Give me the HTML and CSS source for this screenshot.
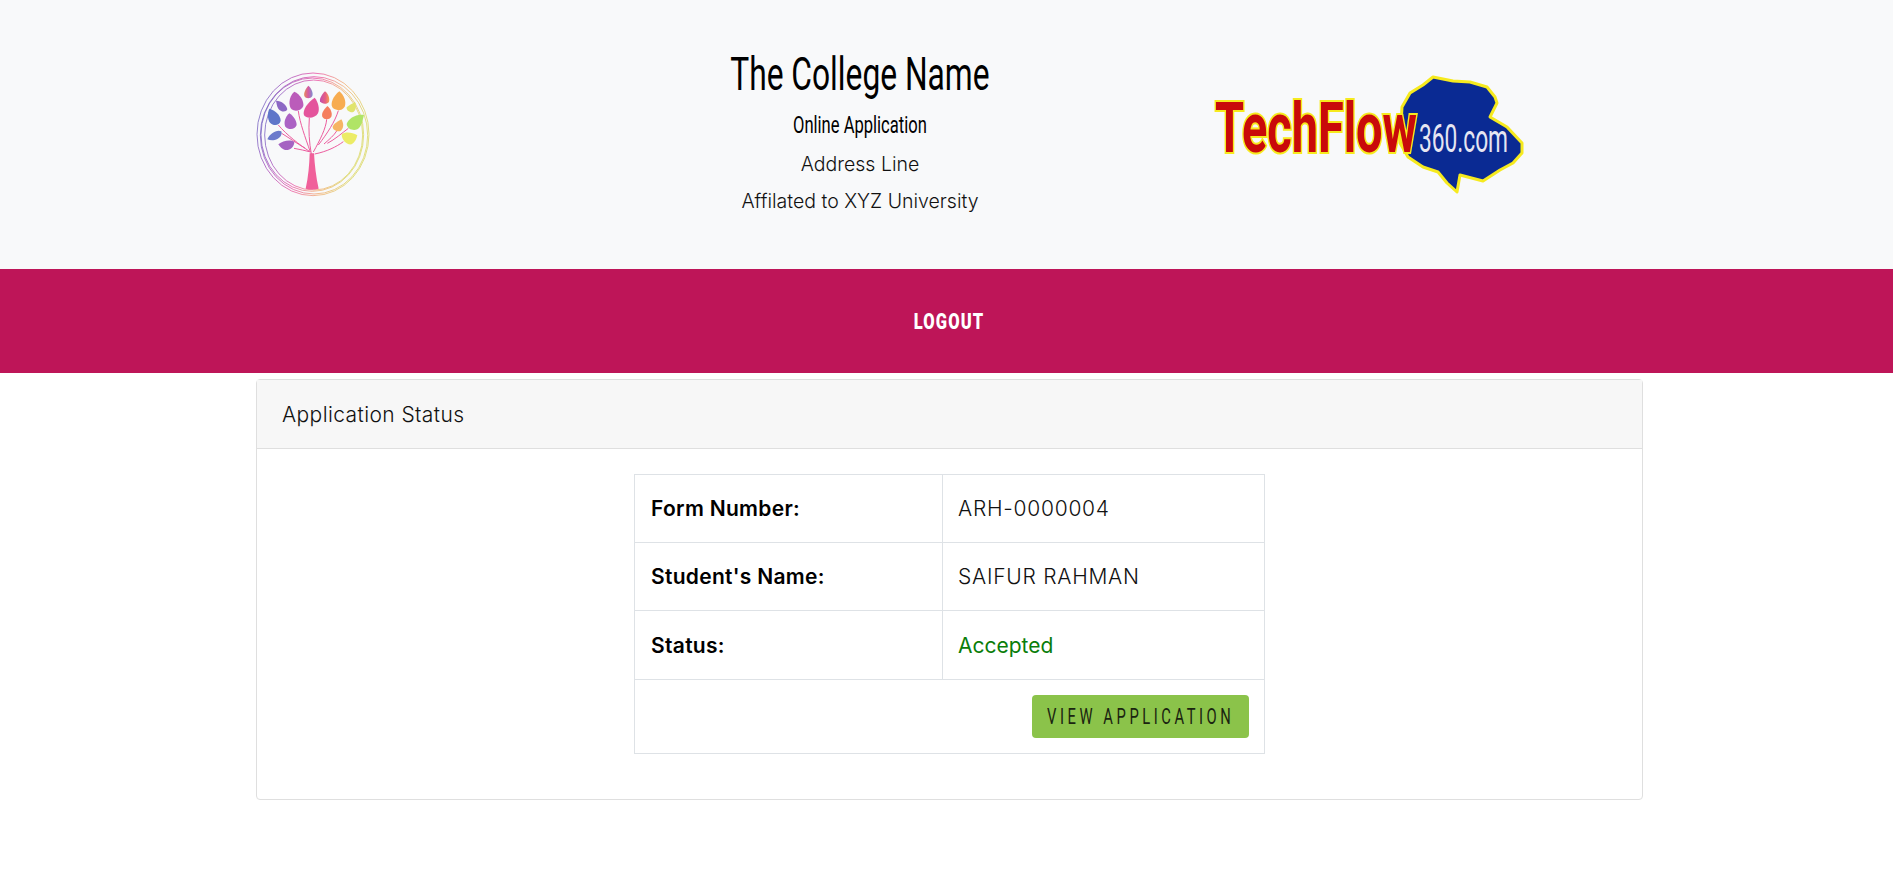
FILE: index.html
```html
<!DOCTYPE html>
<html lang="en">
<head>
<meta charset="utf-8">
<title>Application Status</title>
<link rel="stylesheet" href="styles.css">
</head>
<body>
<header class="masthead">
  <div class="masthead-inner">
    <div class="logo-left">
      <svg class="tree" viewBox="48 60 348 396" width="116" height="132" aria-hidden="true">
        <defs>
          <linearGradient id="ring" x1="0" y1="0" x2="1" y2="0.25">
            <stop offset="0" stop-color="#5f74c8"/>
            <stop offset=".25" stop-color="#a85cc0"/>
            <stop offset=".5" stop-color="#ea5aa8"/>
            <stop offset=".75" stop-color="#f2b27a"/>
            <stop offset="1" stop-color="#dcd96a"/>
          </linearGradient>
          <linearGradient id="l-top" x1="0" y1="0" x2="1" y2="0">
            <stop offset="0" stop-color="#e68a5c"/><stop offset=".5" stop-color="#d55aa5"/><stop offset="1" stop-color="#7f8fd0"/>
          </linearGradient>
          <linearGradient id="l-top2" x1="0" y1="0" x2="1" y2="0">
            <stop offset="0" stop-color="#c04fb0"/><stop offset=".6" stop-color="#e85f80"/><stop offset="1" stop-color="#f2a050"/>
          </linearGradient>
        </defs>
        <g fill="none" stroke="url(#ring)" stroke-width="2.500">
          <ellipse cx="219" cy="253" rx="168" ry="184"/>
          <ellipse cx="222" cy="256" rx="161" ry="176"/>
          <ellipse cx="217" cy="254" rx="154" ry="170"/>
          <ellipse cx="221" cy="255" rx="147" ry="165"/>
        </g>
        <path d="M197 416 C205 380 208 345 209 310 L222 310 C224 345 228 380 236 416 Q216 422 197 416 Z" fill="#f0609a"/>
        <g fill="none" stroke="#ec5c9e" stroke-width="3">
          <path d="M214 312 C208 280 205 240 208 204"/>
          <path d="M211 306 C195 260 180 220 175 183"/>
          <path d="M220 306 C240 270 258 235 260 208"/>
          <path d="M235 285 C262 250 285 215 295 182"/>
          <path d="M252 282 C268 268 282 256 290 243"/>
          <path d="M224 312 C260 305 290 290 310 275"/>
          <path d="M262 280 C285 268 305 250 325 235"/>
          <path d="M208 304 C180 285 140 255 115 225"/>
          <path d="M212 306 C196 302 180 298 162 295"/>
          <path d="M196 295 C170 280 145 262 125 250"/>
        </g>
        <path fill="url(#l-top)" d="M205 107 C215 115 220 130 217 138 C212 147 197 147 193 138 C190 128 198 115 205 107Z"/>
        <path fill="url(#l-top2)" d="M255 124 C265 130 270 148 267 155 C262 164 245 163 240 154 C238 145 247 132 255 124Z"/>
        <path fill="#bb5cba" d="M163 125 C180 132 192 152 190 168 C185 182 165 186 155 178 C145 168 145 140 163 125Z"/>
        <path fill="#e4549c" d="M224 143 C234 155 240 175 234 190 C226 205 200 208 192 196 C186 180 205 155 224 143Z"/>
        <path fill="#f7ac50" d="M298 124 C312 135 320 155 314 170 C305 185 285 182 277 172 C270 160 280 138 298 124Z"/>
        <path fill="#f57e5e" d="M262 168 C272 175 278 190 274 200 C268 210 252 210 247 200 C243 190 253 177 262 168Z"/>
        <path fill="#8c68c4" d="M108 152 C125 152 140 165 142 178 C138 188 122 186 115 176 C110 168 110 160 108 152Z"/>
        <path fill="#5f76c9" d="M88 176 C105 180 122 195 122 212 C118 228 100 228 90 218 C82 206 82 190 88 176Z"/>
        <path fill="#ab62c4" d="M148 190 C160 198 170 212 170 225 C165 240 145 240 136 230 C130 218 136 200 148 190Z"/>
        <path fill="#6c7acc" d="M82 268 C90 250 110 238 124 244 C128 255 118 268 104 270 C95 272 88 270 82 268Z"/>
        <path fill="#a562c2" d="M115 283 C128 272 150 268 163 275 C163 290 150 302 135 300 C126 298 120 290 115 283Z"/>
        <path fill="#e0e46c" d="M345 155 C350 170 348 182 338 187 C328 188 318 180 320 172 C325 165 338 162 345 155Z"/>
        <path fill="#b0e466" d="M372 195 C350 190 325 205 320 222 C322 238 340 243 352 238 C365 230 368 210 372 195Z"/>
        <path fill="#f6b464" d="M304 208 C312 220 312 235 302 243 C292 246 278 240 278 230 C282 220 295 214 304 208Z"/>
        <path fill="#ecec66" d="M352 256 C335 245 315 245 305 253 C305 270 320 286 335 283 C345 278 350 266 352 256Z"/>
      </svg>
    </div>
    <div class="college">
      <h1 class="college-name"><span class="cond-title">The College Name</span></h1>
      <h2 class="college-sub"><span class="cond-sub">Online Application</span></h2>
      <p class="college-line">Address Line</p>
      <p class="college-line">Affilated to XYZ University</p>
    </div>
    <div class="logo-right">
      <svg class="techflow" viewBox="0 0 340 150" width="340" height="150" aria-label="TechFlow360.com">
        <path d="M202 47 L210 33 L223 25 L233 17 L253 21 L270 22 L287 27 L295 37 L297 43 L290 57 L307 67 L322 83 L322 93 L313 103 L300 110 L283 121 L260 115 L257 132 L247 123 L238 112 L223 107 L208 97 L200 83 Z" fill="#0a2a93" stroke="#f6ea1e" stroke-width="3" stroke-linejoin="round"/>
        <text class="tf-text" x="15" y="92" textLength="202" lengthAdjust="spacingAndGlyphs">TechFlow</text>
        <text class="tf-dom" x="219" y="92" textLength="89" lengthAdjust="spacingAndGlyphs">360.com</text>
      </svg>
    </div>
  </div>
</header>
<nav class="navband"><a class="nav-link" href="#"><span class="cond-logout">LOGOUT</span></a></nav>
<main class="page">
  <section class="card">
    <div class="card-header">Application Status</div>
    <div class="card-body">
      <table class="status">
        <tr><th>Form Number:</th><td>ARH-0000004</td></tr>
        <tr><th>Student's Name:</th><td>SAIFUR RAHMAN</td></tr>
        <tr class="row-tall"><th>Status:</th><td class="ok">Accepted</td></tr>
        <tr><td class="actions" colspan="2"><a class="btn" href="#"><span class="cond-btn">VIEW APPLICATION</span></a></td></tr>
      </table>
    </div>
  </section>
</main>
</body>
</html>
```
FILE: styles.css
```css
* { box-sizing: border-box; }
html, body { margin: 0; padding: 0; }
body {
  background: #fff;
  color: #212529;
  font-family: Inter, "Noto Sans", sans-serif;
  min-height: 875px;
}
.masthead { background: #f8f9fa; height: 269px; }
.masthead-inner {
  width: 1387px;
  margin-left: 256px;
  display: grid;
  grid-template-columns: 344px 520px 1fr;
  height: 100%;
  align-items: start;
}
.logo-left { padding-top: 70px; }
.tree { display: block; }
.college { text-align: center; color: #000; padding-top: 44px; }
.college-name, .college-sub { font-family: Roboto, sans-serif; white-space: nowrap; }
.college-name { font-weight: 400; font-size: 46px; line-height: 60px; margin: 0 0 7px; }
.college-sub { font-weight: 400; font-size: 23px; line-height: 30px; margin: 0 0 10px; }
.cond-title, .cond-sub, .cond-logout, .cond-btn { display: inline-block; white-space: nowrap; }
.cond-title { transform: scaleX(.69); }
.cond-sub { transform: scaleX(.72); }
.college-line { font-size: 19.500px; line-height: 26px; margin: 0 0 11px; color: #111; font-weight: 300; }
.logo-right { padding-left: 80px; padding-top: 60px; }
.techflow { display: block; overflow: visible; }
.tf-text {
  font-family: Roboto, sans-serif;
  font-weight: 700;
  font-size: 70px;
  fill: #c90a0a;
  stroke: #f6ea1e;
  stroke-width: 4px;
  paint-order: stroke;
}
.tf-dom { font-family: Roboto, sans-serif; font-size: 38px; fill: #e6e6f2; }
.navband {
  background: #be1558;
  height: 104px;
  padding-left: 6px;
  display: flex;
  align-items: center;
  justify-content: center;
}
.nav-link { color: #fff; text-decoration: none; font-family: Roboto, sans-serif; font-weight: 900; font-size: 22px; letter-spacing: 1.500px; }
.cond-logout { transform: scaleX(.75); }
.page { width: 1387px; margin-left: 256px; padding-top: 6px; }
.card { border: 1px solid #dfdfdf; border-radius: 4px; height: 421px; }
.card-header {
  background: #f7f7f7;
  border-bottom: 1px solid #dfdfdf;
  height: 69px;
  padding: 0 25px;
  display: flex;
  align-items: center;
  font-size: 21px;
  letter-spacing: .4px;
  font-weight: 300;
  color: #111;
}
.card-body { padding: 25px 0 0; }
.status {
  width: 631px;
  margin: 0 auto;
  border-collapse: collapse;
  font-size: 21px;
  font-weight: 300;
  letter-spacing: .75px;
  color: #111;
}
.status th, .status td { border: 1px solid #dee2e6; height: 68px; padding: 0 15px; text-align: left; }
.status .row-tall th, .status .row-tall td { height: 69px; }
.status th { width: 308px; padding-left: 16px; color: #000; font-weight: 600; letter-spacing: .3px; }
.status .ok { color: #0a7d0a; font-weight: 400; letter-spacing: 0; }
.status .actions { text-align: right; height: 74px; }
.btn {
  display: inline-block;
  background: #8bc34a;
  color: #1a2410;
  border-radius: 4px;
  text-decoration: none;
  font-family: Roboto, sans-serif;
  font-size: 22px;
  font-weight: 400;
  letter-spacing: 5.300px;
  line-height: 43px;
  width: 217px;
  white-space: nowrap;
  overflow: hidden;
  text-align: center;
  vertical-align: middle;
}
.cond-btn { transform: scaleX(.67); transform-origin: center; margin: 0 -60px; }
```
